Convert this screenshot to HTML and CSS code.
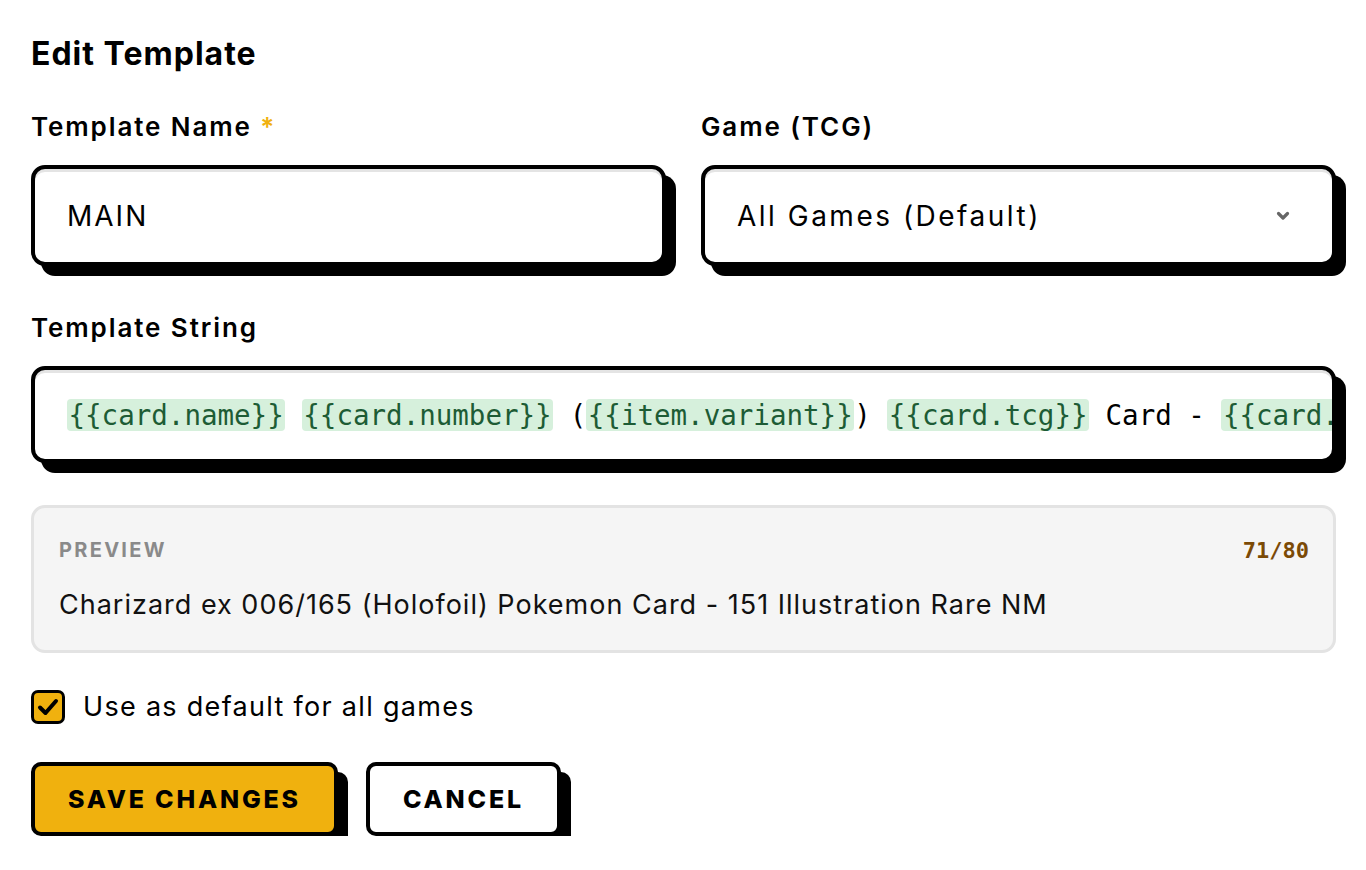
FILE: index.html
```html
<!DOCTYPE html>
<html lang="en">
<head>
<meta charset="UTF-8">
<meta name="viewport" content="width=device-width, initial-scale=1.0">
<title>Edit Template</title>
<link rel="stylesheet" href="styles.css">
</head>
<body>
  <main class="editor">
    <h1>Edit Template</h1>
    <form class="template-form">
      <div class="row">
        <div class="field">
          <label for="txtName">Template Name <span class="req">*</span></label>
          <div class="box">
            <input type="text" id="txtName" value="MAIN">
          </div>
        </div>
        <div class="field">
          <label for="selGame">Game (TCG)</label>
          <div class="box select-box">
            <span class="select-value">All Games (Default)</span>
            <svg class="chevron" width="14" height="10" viewBox="0 0 14 10">
              <path d="M2.5 2.5 L7 7 L11.5 2.5" fill="none" stroke="#666" stroke-width="3.2" stroke-linecap="round" stroke-linejoin="round"/>
            </svg>
          </div>
        </div>
      </div>

      <div class="field">
        <label>Template String</label>
        <div class="box string-box">
          <div class="string-value"><span class="token">{{card.name}}</span> <span class="token">{{card.number}}</span> (<span class="token">{{item.variant}}</span>) <span class="token">{{card.tcg}}</span> Card - <span class="token">{{card.set}}</span> <span class="token">{{card.rarity}}</span> <span class="token">{{item.condition}}</span></div>
        </div>
      </div>

      <div class="preview">
        <div class="preview-head">
          <span class="preview-label">PREVIEW</span>
          <span class="preview-count">71/80</span>
        </div>
        <div class="preview-text">Charizard ex 006/165 (Holofoil) Pokemon Card - 151 Illustration Rare NM</div>
      </div>

      <label class="check-row">
        <span class="checkbox">
          <svg width="26" height="26" viewBox="0 0 26 26">
            <path d="M5 13.5 L10.5 19 L21 7" fill="none" stroke="#000" stroke-width="4" stroke-linecap="round" stroke-linejoin="round"/>
          </svg>
        </span>
        Use as default for all games
      </label>

      <div class="actions">
        <button type="submit" class="btn btn-primary">Save Changes</button>
        <button type="button" class="btn">Cancel</button>
      </div>
    </form>
  </main>
</body>
</html>
```

FILE: styles.css
```css
body {
  margin: 0;
  padding: 0;
  font-family: Inter, "Open Sans", sans-serif;
  background-color: #ffffff;
  color: #000000;
}

.editor {
  padding: 34px 30px 0 31px;
  width: 1305px;
}

h1 {
  font-size: 32px;
  line-height: 40px;
  font-weight: 700;
  letter-spacing: 1px;
  margin: 0 0 36px 0;
}

.row {
  display: grid;
  grid-template-columns: 1fr 1fr;
  gap: 35px;
  margin-bottom: 45px;
}

.field label {
  display: block;
  font-size: 26px;
  line-height: 34px;
  font-weight: 600;
  letter-spacing: 1.9px;
  margin-bottom: 21px;
}

.req {
  color: #f0b10e; /* yellow */
  letter-spacing: 0;
}

.box {
  box-sizing: border-box;
  height: 101px;
  border: 4px solid #000000;
  border-radius: 14px;
  background-color: #ffffff;
  box-shadow: 10px 10px 0 #000000, inset 0 3px 0 #e4e4e4;
  display: flex;
  align-items: center;
  padding: 0 32px;
  overflow: hidden;
}

.box input {
  border: none;
  outline: none;
  background: transparent;
  width: 100%;
  font-family: inherit;
  font-size: 28px;
  letter-spacing: 2px;
  color: #000000;
  padding: 0;
}

.select-box {
  justify-content: space-between;
  font-size: 28px;
  letter-spacing: 2.5px;
  padding-right: 42px;
}

.string-box {
  height: 97px;
  white-space: nowrap;
}

.string-value {
  font-family: "DejaVu Sans Mono", monospace;
  font-size: 27.5px;
  color: #000000;
}

.token {
  background-color: #d6f0dc; /* light green */
  color: #1d5c35;
  border-radius: 4px;
  padding: 0 1.5px;
}

.preview {
  box-sizing: border-box;
  margin-top: 42px;
  height: 148px;
  background-color: #f5f5f5;
  border: 3px solid #e3e3e3;
  border-radius: 14px;
  padding: 29px 24px 0 25px;
}

.preview-head {
  display: flex;
  justify-content: space-between;
  align-items: center;
  height: 26px;
  margin-bottom: 24px;
}

.preview-label {
  font-size: 20px;
  font-weight: 700;
  letter-spacing: 2.3px;
  color: #8a8a8a;
}

.preview-count {
  font-family: "DejaVu Sans Mono", monospace;
  font-size: 22px;
  font-weight: 700;
  color: #7b4a06; /* brown */
}

.preview-text {
  font-size: 27px;
  line-height: 36px;
  letter-spacing: 1px;
  color: #111111;
}

.check-row {
  display: flex;
  align-items: center;
  gap: 18px;
  height: 34px;
  margin-top: 37px;
  font-size: 27px;
  line-height: 34px;
  letter-spacing: 1.3px;
  cursor: pointer;
}

.checkbox {
  box-sizing: border-box;
  width: 34px;
  height: 34px;
  border: 3px solid #000000;
  border-radius: 7px;
  background-color: #f0b10e;
  display: flex;
  align-items: center;
  justify-content: center;
}

.actions {
  display: flex;
  gap: 28px;
  margin-top: 38px;
}

.btn {
  box-sizing: border-box;
  height: 74px;
  padding: 0 33px;
  border: 4px solid #000000;
  border-radius: 10px;
  background-color: #ffffff;
  box-shadow: 10px 10px 0 #000000;
  font-family: inherit;
  font-size: 25px;
  font-weight: 800;
  letter-spacing: 2.8px;
  text-transform: uppercase;
  color: #000000;
  cursor: pointer;
}

.btn-primary {
  background-color: #f0b10e; /* yellow */
}
```
